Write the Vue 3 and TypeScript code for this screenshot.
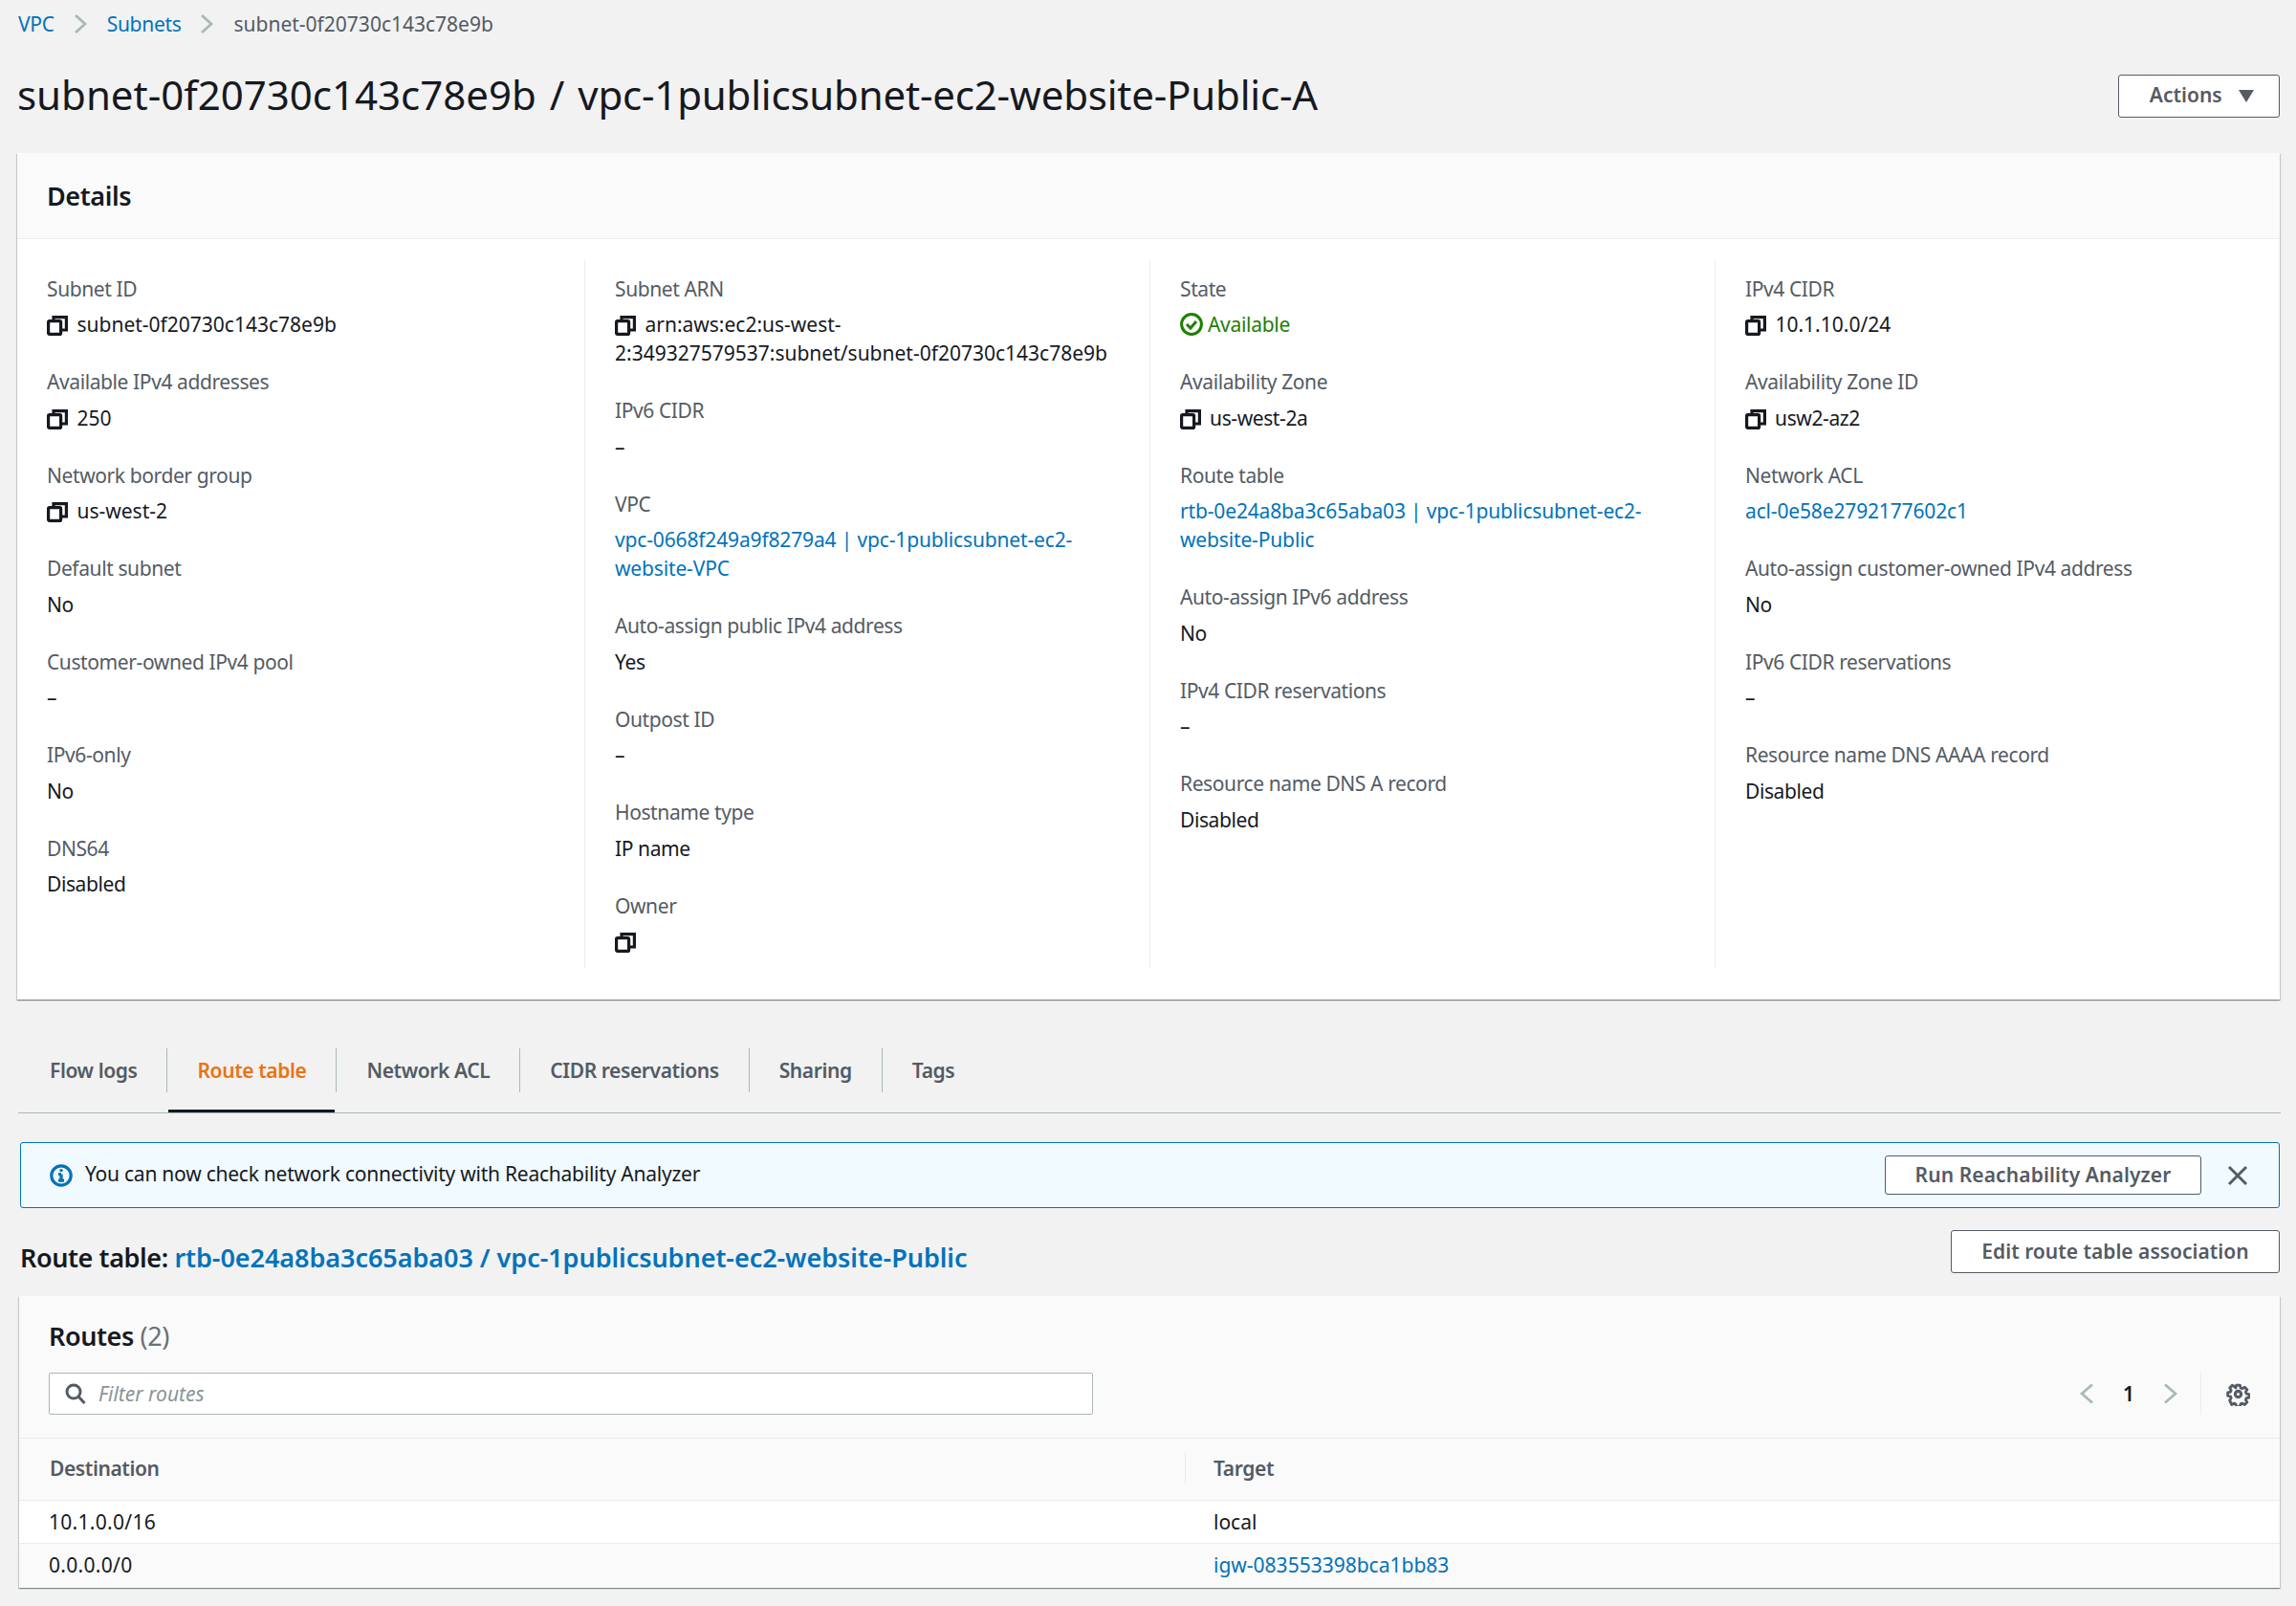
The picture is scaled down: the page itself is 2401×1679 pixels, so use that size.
<script setup lang="ts">
interface Field {
  label: string;
  value: string;
  copy?: boolean;
  link?: boolean;
  status?: boolean;
  plain?: boolean;
}

const columns: Field[][] = [
  [
    { label: 'Subnet ID', value: 'subnet-0f20730c143c78e9b', copy: true },
    { label: 'Available IPv4 addresses', value: '250', copy: true },
    { label: 'Network border group', value: 'us-west-2', copy: true },
    { label: 'Default subnet', value: 'No', plain: true },
    { label: 'Customer-owned IPv4 pool', value: '–' },
    { label: 'IPv6-only', value: 'No', plain: true },
    { label: 'DNS64', value: 'Disabled', plain: true },
  ],
  [
    { label: 'Subnet ARN', value: 'arn:aws:ec2:us-west-2:349327579537:subnet/subnet-0f20730c143c78e9b', copy: true },
    { label: 'IPv6 CIDR', value: '–' },
    { label: 'VPC', value: 'vpc-0668f249a9f8279a4 | vpc-1publicsubnet-ec2-website-VPC', link: true },
    { label: 'Auto-assign public IPv4 address', value: 'Yes', plain: true },
    { label: 'Outpost ID', value: '–' },
    { label: 'Hostname type', value: 'IP name', plain: true },
    { label: 'Owner', value: '', copy: true },
  ],
  [
    { label: 'State', value: 'Available', status: true },
    { label: 'Availability Zone', value: 'us-west-2a', copy: true, plain: true },
    { label: 'Route table', value: 'rtb-0e24a8ba3c65aba03 | vpc-1publicsubnet-ec2-website-Public', link: true },
    { label: 'Auto-assign IPv6 address', value: 'No', plain: true },
    { label: 'IPv4 CIDR reservations', value: '–' },
    { label: 'Resource name DNS A record', value: 'Disabled', plain: true },
  ],
  [
    { label: 'IPv4 CIDR', value: '10.1.10.0/24', copy: true },
    { label: 'Availability Zone ID', value: 'usw2-az2', copy: true, plain: true },
    { label: 'Network ACL', value: 'acl-0e58e2792177602c1', link: true },
    { label: 'Auto-assign customer-owned IPv4 address', value: 'No', plain: true },
    { label: 'IPv6 CIDR reservations', value: '–' },
    { label: 'Resource name DNS AAAA record', value: 'Disabled', plain: true },
  ],
];

const tabs = ['Flow logs', 'Route table', 'Network ACL', 'CIDR reservations', 'Sharing', 'Tags'];
const activeTab = 'Route table';
</script>

<template>
  <div class="page">
    <nav class="crumbs">
      <a>VPC</a>
      <svg class="crumb-arrow" viewBox="0 0 14 22"><path d="M2 2l10 9-10 9" /></svg>
      <a>Subnets</a>
      <svg class="crumb-arrow" viewBox="0 0 14 22"><path d="M2 2l10 9-10 9" /></svg>
      <span>subnet-0f20730c143c78e9b</span>
    </nav>

    <header class="title-row">
      <h1>subnet-0f20730c143c78e9b / <span>vpc-1publicsubnet-ec2-website-Public-A</span></h1>
      <button class="btn actions">Actions <i class="caret"></i></button>
    </header>

    <section class="card details">
      <div class="card-head"><h2>Details</h2></div>
      <div class="columns">
        <div v-for="(col, i) in columns" :key="i" class="col">
          <div v-for="f in col" :key="f.label" class="field">
            <div class="label">{{ f.label }}</div>
            <div class="value" :class="{ link: f.link, ok: f.status, plain: f.plain }">
              <svg v-if="f.copy" class="copy" viewBox="0 0 22 21">
                <path d="M7 5V1.600h13.400V15h-5" />
                <rect x="1.600" y="5.600" width="13" height="13.800" rx="1.200" />
              </svg>
              <svg v-if="f.status" class="check" viewBox="0 0 24 24">
                <circle cx="12" cy="12" r="10.400" />
                <path d="M7 12l4 4 6-7" />
              </svg>
              {{ f.value }}
            </div>
          </div>
        </div>
      </div>
    </section>

    <div class="tabs">
      <div v-for="t in tabs" :key="t" class="tab" :class="{ active: t === activeTab }">
        <span>{{ t }}</span>
      </div>
    </div>

    <div class="alert">
      <svg class="info" viewBox="0 0 24 24">
        <circle cx="12" cy="12" r="10.200" />
        <path d="M12 10.500V17M9 17.200h6M9 10.500h3" />
        <circle class="dot" cx="12" cy="6.600" r="1.700" />
      </svg>
      <span class="alert-text">You can now check network connectivity with Reachability Analyzer</span>
      <button class="btn run">Run Reachability Analyzer</button>
      <svg class="close" viewBox="0 0 22 22"><path d="M2 2l18 18M20 2L2 20" /></svg>
    </div>

    <div class="rt-row">
      <h2 class="rt-title">Route table: <a>rtb-0e24a8ba3c65aba03 / vpc-1publicsubnet-ec2-website-Public</a></h2>
      <button class="btn edit">Edit route table association</button>
    </div>

    <section class="card routes">
      <div class="routes-head">
        <h2>Routes <span class="count">(2)</span></h2>
        <div class="tools">
          <div class="filter">
            <svg class="search" viewBox="0 0 22 22">
              <circle cx="9" cy="9" r="7" />
              <path d="M14 14l6.500 7" />
            </svg>
            <span>Filter routes</span>
          </div>
          <div class="pager">
            <svg class="chev" viewBox="0 0 14 22"><path d="M13 1.500L2 11l11 9.500" /></svg>
            <b>1</b>
            <svg class="chev" viewBox="0 0 14 22"><path d="M1 1.500L12 11 1 20.500" /></svg>
            <div class="gear-wrap">
              <svg class="gear" viewBox="0 0 24 24">
                <path d="M10 2h4l.7 3 1.900.8 2.600-1.600 2.800 2.800-1.600 2.600.8 1.900 3 .7v3.600l-3 .7-.8 1.900 1.600 2.600-2.800 2.800-2.600-1.600-1.900.8-.7 3h-4l-.7-3-1.900-.8-2.600 1.600L2.600 19l1.600-2.600-.8-1.900-3-.7v-3.600l3-.7.8-1.900L2.600 5l2.800-2.800L8 3.800 9.300 5z" transform="translate(1.200 1.200) scale(.9)" />
                <circle cx="12" cy="12" r="3" />
              </svg>
            </div>
          </div>
        </div>
      </div>
      <div class="table">
        <div class="tr th">
          <div class="cell">Destination</div>
          <div class="cell sep">Target</div>
        </div>
        <div class="tr">
          <div class="cell">10.1.0.0/16</div>
          <div class="cell">local</div>
        </div>
        <div class="tr">
          <div class="cell">0.0.0.0/0</div>
          <div class="cell"><a>igw-083553398bca1bb83</a></div>
        </div>
      </div>
    </section>
  </div>
</template>

<style>
body {
  margin: 0;
  background: #f2f2f2;
}
</style>

<style scoped>
.page {
  box-sizing: border-box;
  width: 2401px;
  height: 1679px;
  overflow: hidden;
  padding: 10px 17px 0 18px;
  background: #f2f2f2;
  color: #16191f;
  font-family: "Noto Sans", sans-serif;
  font-size: 21px;
  line-height: 30px;
}
a {
  color: #0073bb;
}
h1, h2 {
  margin: 0;
}
.crumbs {
  display: flex;
  align-items: center;
  height: 30px;
  padding-left: 1px;
  color: #545b64;
}
.crumbs a {
  letter-spacing: -0.3px;
}
.crumb-arrow {
  width: 14px;
  height: 22px;
  margin: 0 21px 0 20px;
  fill: none;
  stroke: #aab7b8;
  stroke-width: 2.800;
}
.title-row {
  display: flex;
  align-items: center;
  justify-content: space-between;
  height: 82px;
  margin-top: 18px;
}
h1 {
  font-size: 42px;
  font-weight: 400;
  line-height: 60px;
  word-spacing: 3px;
}
h1 span {
  letter-spacing: -0.2px;
}
.btn {
  box-sizing: border-box;
  background: #fff;
  border: 1.500px solid #545b64;
  border-radius: 3px;
  color: #545b64;
  font-family: inherit;
  font-size: 21px;
  font-weight: 600;
  line-height: 30px;
  padding: 0 0 2px;
}
.actions {
  width: 169px;
  height: 45px;
  margin-top: 2px;
  padding-left: 6px;
}
.caret {
  display: inline-block;
  width: 0;
  height: 0;
  margin-left: 12px;
  border-left: 8px solid transparent;
  border-right: 8px solid transparent;
  border-top: 13px solid #545b64;
}
.card {
  background: #fff;
  box-shadow: 0 1px 1px 0 rgba(0, 28, 36, 0.3), 1px 1px 1px 0 rgba(0, 28, 36, 0.15), -1px 1px 1px 0 rgba(0, 28, 36, 0.15);
}
.details {
  height: 885px;
  margin-top: 20px;
}
.card-head {
  box-sizing: border-box;
  height: 90px;
  padding: 0 31px;
  display: flex;
  align-items: center;
  background: #fafafa;
  border-bottom: 1px solid #eaeded;
}
h2 {
  font-size: 27px;
  font-weight: 600;
  line-height: 36px;
  letter-spacing: -0.4px;
}
.columns {
  display: grid;
  grid-template-columns: 593px 591px 591px 1fr;
  padding: 22px 0 0;
}
.col {
  box-sizing: border-box;
  height: 740px;
  padding: 14.500px 30px 0 31px;
  border-left: 1px solid #eaeded;
  display: flex;
  flex-direction: column;
  gap: 30px;
}
.col:first-child {
  border-left: none;
}
.label {
  color: #545b64;
  margin-bottom: 7.500px;
  letter-spacing: -0.4px;
}
.value {
  min-height: 30px;
}
.value.plain {
  letter-spacing: -0.4px;
}
.value.link {
  color: #0073bb;
  letter-spacing: -0.15px;
}
.value.ok {
  color: #1d8102;
  display: flex;
  align-items: center;
  gap: 5px;
  letter-spacing: -0.3px;
}
.copy {
  width: 22px;
  height: 21px;
  margin-right: 4px;
  vertical-align: -4px;
  fill: #fff;
  stroke: #16191f;
  stroke-width: 3.200;
}
.check {
  width: 24px;
  height: 24px;
  fill: none;
  stroke: #1d8102;
  stroke-width: 3;
}
.tabs {
  display: flex;
  align-items: stretch;
  margin: 0 -1px 0 1px;
  padding-top: 51px;
  height: 67px;
  border-bottom: 1.500px solid #aab7b8;
}
.tab {
  position: relative;
  padding: 0 31px;
  color: #545b64;
  font-weight: 600;
  letter-spacing: -0.4px;
  display: flex;
  height: 46px;
  align-items: center;
  border-left: 1px solid #aab7b8;
}
.tab:first-child {
  border-left: none;
  padding-left: 33px;
}
.tab.active {
  color: #ec7211;
}
.tab.active::after {
  content: "";
  position: absolute;
  left: 1px;
  right: 1px;
  top: 64px;
  height: 3px;
  background: #16191f;
}
.alert {
  box-sizing: border-box;
  display: flex;
  align-items: center;
  height: 69px;
  margin: 30px 0 0 3px;
  padding: 0 32px 0 30px;
  background: #f1faff;
  border: 1.500px solid #0073bb;
  border-radius: 3px;
}
.info {
  width: 24px;
  height: 24px;
  fill: none;
  stroke: #0073bb;
  stroke-width: 3.200;
}
.info .dot {
  fill: #0073bb;
  stroke: none;
}
.alert-text {
  flex: 1;
  margin: 0 0 3px 13px;
  letter-spacing: -0.24px;
}
.run {
  width: 331px;
  height: 41px;
  letter-spacing: 0.1px;
}
.close {
  width: 22px;
  height: 22px;
  margin-left: 27px;
  fill: none;
  stroke: #545b64;
  stroke-width: 3;
}
.rt-row {
  display: flex;
  justify-content: space-between;
  align-items: flex-start;
  height: 92px;
  margin-left: 3px;
  padding-top: 23px;
  box-sizing: border-box;
}
.rt-title {
  line-height: 36px;
  margin-top: 11px;
}
.rt-title a {
  letter-spacing: -0.05px;
}
.edit {
  width: 344px;
  height: 45px;
}
.routes {
  height: 305px;
  margin-left: 2px;
  background: #fafafa;
}
.routes-head {
  box-sizing: border-box;
  height: 149px;
  padding: 24px 31px 0;
  border-bottom: 1px solid #eaeded;
}
.count {
  color: #687078;
  font-weight: 400;
}
.tools {
  display: flex;
  align-items: center;
  justify-content: space-between;
  margin-top: 20px;
}
.filter {
  box-sizing: border-box;
  display: flex;
  align-items: center;
  width: 1092px;
  height: 44px;
  padding-left: 16px;
  background: #fff;
  border: 1.500px solid #aab7b8;
  border-radius: 2px;
  color: #879596;
  font-style: italic;
}
.search {
  width: 22px;
  height: 22px;
  margin-right: 13px;
  fill: none;
  stroke: #545b64;
  stroke-width: 3;
}
.pager {
  display: flex;
  align-items: center;
}
.pager b {
  width: 74px;
  text-align: center;
  font-weight: 600;
}
.chev {
  width: 14px;
  height: 22px;
  fill: none;
  stroke: #aab7b8;
  stroke-width: 2.800;
}
.gear-wrap {
  display: flex;
  align-items: center;
  justify-content: center;
  margin-left: 24px;
  padding-left: 26px;
  height: 44px;
  border-left: 1px solid #eaeded;
}
.gear {
  width: 25px;
  height: 25px;
  fill: none;
  stroke: #545b64;
  stroke-width: 3;
  stroke-linejoin: round;
}
.table {
  display: flex;
  flex-direction: column;
}
.tr {
  display: grid;
  grid-template-columns: 1219px 1fr;
  height: 44.500px;
  background: #fff;
  border-bottom: 1px solid #eaeded;
  box-sizing: border-box;
}
.tr:last-child {
  border-bottom: none;
  background: #fafafa;
}
.tr:not(.th) .cell:first-child {
  letter-spacing: 0.3px;
}
.th {
  height: 65px;
  padding-bottom: 2px;
  background: #fafafa;
  color: #545b64;
  font-weight: 600;
  letter-spacing: -0.4px;
}
.cell {
  display: flex;
  align-items: center;
  padding-left: 31px;
  position: relative;
}
.th .cell:first-child {
  padding-left: 32px;
}
.cell:nth-child(2) {
  padding-left: 30px;
}
.sep::before {
  content: "";
  position: absolute;
  left: 0;
  top: 15px;
  bottom: 15px;
  border-left: 1px solid #eaeded;
}
</style>
